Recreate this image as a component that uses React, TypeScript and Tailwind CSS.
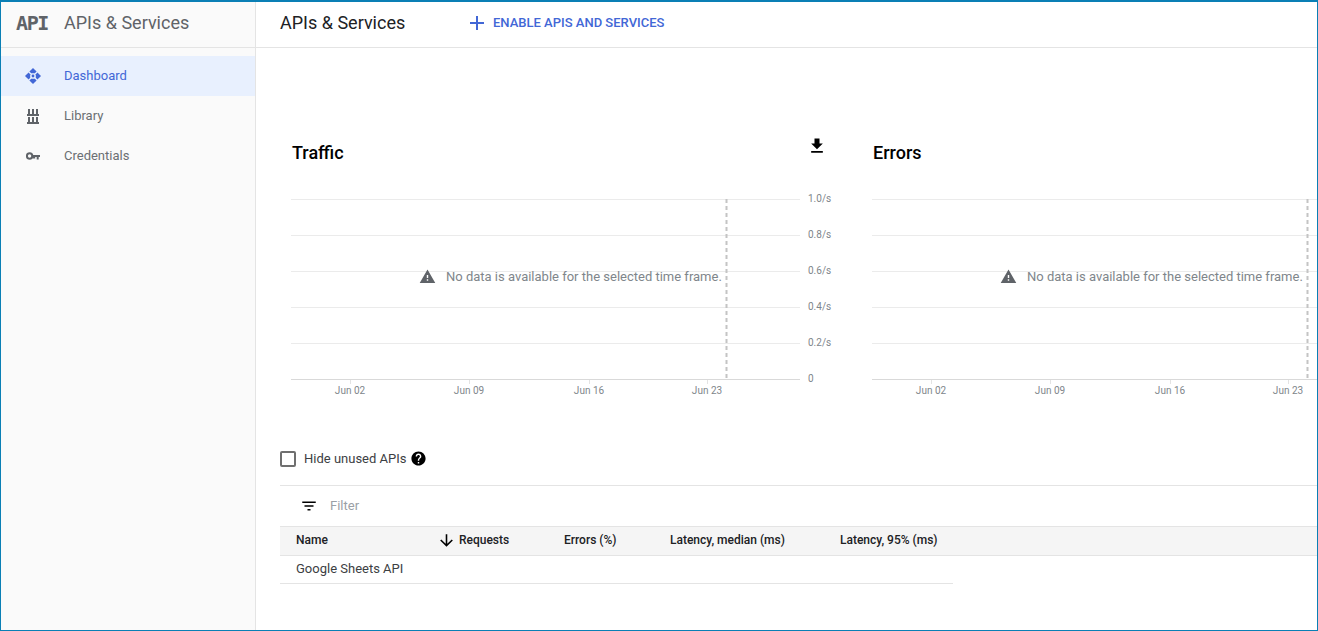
import { MdAdd, MdArrowDownward, MdFileDownload, MdFilterList, MdHelp, MdWarning } from 'react-icons/md';

const gridLines = [9, 45, 81, 117, 153];
const yLabels = ['1.0/s', '0.8/s', '0.6/s', '0.4/s', '0.2/s', '0'];
const xLabels = [
  { x: 70, text: 'Jun 02' },
  { x: 189, text: 'Jun 09' },
  { x: 309, text: 'Jun 16' },
  { x: 427, text: 'Jun 23' },
];

function DashboardIcon() {
  return (
    <svg width="16" height="16" viewBox="0 0 16 16" fill="#4267d6">
      <path d="M8 0 L11.6 3.6 L9.8 5.2 L6.2 5.2 L4.4 3.6 Z" />
      <path d="M8 16 L11.6 12.4 L9.8 10.8 L6.2 10.8 L4.4 12.4 Z" />
      <path d="M0 8 L3.6 4.4 L5.2 6.2 L5.2 9.8 L3.6 11.6 Z" />
      <path d="M16 8 L12.4 4.4 L10.8 6.2 L10.8 9.8 L12.4 11.6 Z" />
      <circle cx="8" cy="8" r="1.4" />
    </svg>
  );
}

function LibraryIcon() {
  return (
    <svg width="12" height="15" viewBox="0 0 12 15" fill="#5f6368">
      <path d="M1 0h2v5H1zM5 0h2v5H5zM9 0h2v5H9zM0 5h12v2H0zM1 8h2v5H1zM5 8h2v5H5zM9 8h2v5H9zM0 13h12v2H0z" />
    </svg>
  );
}

function KeyIcon() {
  return (
    <svg width="14" height="8" viewBox="0 0 14 8">
      <circle cx="3.6" cy="4" r="2.7" fill="none" stroke="#5f6368" strokeWidth="2" />
      <path d="M6.5 3h7.5v2h-1.3v2.4h-2V5H9.2v1.4H6.5z" fill="#5f6368" />
    </svg>
  );
}

function NavItem({ icon, label, active }: { icon: React.ReactNode; label: string; active?: boolean }) {
  return (
    <div className={`flex h-10 items-center ${active ? 'bg-[#e8f0fe] text-[#4267d6]' : 'text-[#6b6f73]'}`}>
      <div className="flex w-[63px] shrink-0 justify-center">{icon}</div>
      <span className="text-[13px]">{label}</span>
    </div>
  );
}

function ChartPanel({ title, showAxis }: { title: string; showAxis?: boolean }) {
  return (
    <div className="w-[581px] shrink-0">
      <div className="flex h-[55px] items-start pl-3 pt-[5px]">
        <h2 className="text-[18px] leading-[25px] font-medium text-black">{title}</h2>
        {showAxis && <MdFileDownload className="ml-auto mr-[34px] -mt-[4px] text-black" size={20} />}
      </div>
      <div className="relative h-[220px]">
        <svg width="581" height="220" fontFamily="Roboto, sans-serif" fontSize="10" fill="#80868b">
          {gridLines.map((y) => (
            <line key={y} x1="11" x2="520" y1={y + 0.5} y2={y + 0.5} stroke="#ebebeb" />
          ))}
          <line x1="11" x2="520" y1="189.5" y2="189.5" stroke="#d9d9d9" />
          <line x1="446.5" x2="446.5" y1="9" y2="189" stroke="#c4c4c4" strokeWidth="2" strokeDasharray="4 3" />
          {showAxis &&
            yLabels.map((text, i) => (
              <text key={text} x="528" y={12 + i * 36}>
                {text}
              </text>
            ))}
          {xLabels.map((l) => (
            <g key={l.text}>
              <line x1={l.x + 0.5} x2={l.x + 0.5} y1="190" y2="194" stroke="#e3e3e3" />
              <text x={l.x} y="204" textAnchor="middle">
                {l.text}
              </text>
            </g>
          ))}
        </svg>
        <div className="absolute left-[139px] top-[77px] flex items-center">
          <MdWarning className="text-[#5f6368]" size={17} />
          <span className="ml-[10px] whitespace-nowrap text-[13px] text-[#80868b]">
            No data is available for the selected time frame.
          </span>
        </div>
      </div>
    </div>
  );
}

export default function App() {
  return (
    <div className="flex h-[631px] w-[1318px] flex-col overflow-hidden border border-t-2 border-[#0a7fb5] bg-white font-['Roboto',sans-serif]">
      <div className="flex min-h-0 flex-1">
        <aside className="flex w-[255px] shrink-0 flex-col border-r border-[#e4e4e4] bg-[#fafafa]">
          <div className="flex h-[46px] items-center border-b border-[#e4e4e4] pb-1">
            <span className="ml-[15px] w-[48px] font-['DejaVu_Sans_Mono',monospace] text-[20px] font-bold tracking-[-1.4px] text-[#5f6368]">
              API
            </span>
            <span className="text-[18px] text-[#5f6368]">APIs &amp; Services</span>
          </div>
          <nav className="pt-2">
            <NavItem icon={<DashboardIcon />} label="Dashboard" active />
            <NavItem icon={<LibraryIcon />} label="Library" />
            <NavItem icon={<KeyIcon />} label="Credentials" />
          </nav>
        </aside>

        <main className="flex min-w-0 flex-1 flex-col">
          <header className="flex h-[46px] shrink-0 items-center border-b border-[#e4e4e4] pb-1 pl-6">
            <h1 className="w-[185px] text-[18px] text-[#202124]">APIs &amp; Services</h1>
            <MdAdd className="text-[#4267d6]" size={24} />
            <span className="ml-[4px] text-[13px] font-medium text-[#4267d6]">ENABLE APIS AND SERVICES</span>
          </header>

          <div className="min-h-0 flex-1 pl-6 pt-[87px]">
            <div className="flex">
              <ChartPanel title="Traffic" showAxis />
              <ChartPanel title="Errors" />
            </div>

            <div className="mt-[40px] flex h-[17px] items-center">
              <span className="h-4 w-4 rounded-[2px] border-2 border-[#6f6f6f]" />
              <span className="ml-2 text-[13px] text-[#3c4043]">Hide unused APIs</span>
              <MdHelp className="ml-[4px] text-black" size={17} />
            </div>

            <div className="mt-[18px] flex h-[41px] items-center border-t border-[#e4e4e4] pb-[1px] pl-5">
              <MdFilterList className="text-black" size={18} />
              <span className="ml-[12px] text-[13px] text-[#9aa0a6]">Filter</span>
            </div>

            <div className="flex h-[30px] items-center border-y border-[#e4e4e4] bg-[#f5f5f5] pb-[2px] text-[12px] font-medium text-[#202124]">
              <span className="w-[157px] pl-4">Name</span>
              <MdArrowDownward className="text-black" size={19} />
              <span className="ml-[2px] w-[106px] pl-[1px]">Requests</span>
              <span className="w-[106px]">Errors (%)</span>
              <span className="w-[170px]">Latency, median (ms)</span>
              <span>Latency, 95% (ms)</span>
            </div>

            <div className="flex h-[28px] w-[673px] items-center border-b border-[#e4e4e4] pb-[2px] pl-4 text-[13px] text-[#3c4043]">
              Google Sheets API
            </div>
          </div>
        </main>
      </div>
    </div>
  );
}
